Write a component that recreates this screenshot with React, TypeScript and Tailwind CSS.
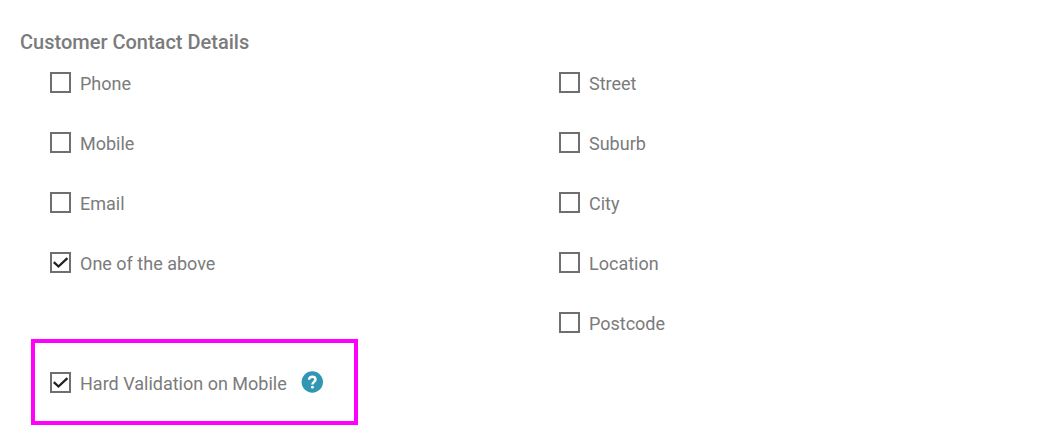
import { useState } from "react";

interface Field {
  id: string;
  label: string;
}

const contactFields: Field[] = [
  { id: "phone", label: "Phone" },
  { id: "mobile", label: "Mobile" },
  { id: "email", label: "Email" },
  { id: "oneOf", label: "One of the above" },
];

const addressFields: Field[] = [
  { id: "street", label: "Street" },
  { id: "suburb", label: "Suburb" },
  { id: "city", label: "City" },
  { id: "location", label: "Location" },
  { id: "postcode", label: "Postcode" },
];

interface CheckFieldProps {
  field: Field;
  checked: boolean;
  onToggle: (id: string) => void;
}

function CheckField({ field, checked, onToggle }: CheckFieldProps) {
  return (
    <div className="flex h-6 items-start gap-2">
      <span className="grid h-6 w-6 shrink-0 place-items-center">
        <input
          id={field.id}
          type="checkbox"
          checked={checked}
          onChange={() => onToggle(field.id)}
          className="col-start-1 row-start-1 h-[21px] w-[21px] appearance-none border-2 border-[#6f6f6f] bg-white"
        />
        {checked && (
          <svg
            viewBox="0 0 21 21"
            className="pointer-events-none col-start-1 row-start-1 h-[21px] w-[21px]"
            fill="none"
            stroke="#212121"
            strokeWidth="2.3"
          >
            <path d="M3.8 10.2l4.7 4.3 8.9-8.3" />
          </svg>
        )}
      </span>
      <label htmlFor={field.id} className="pt-0.5 text-lg leading-6">
        {field.label}
      </label>
    </div>
  );
}

function HelpIcon() {
  return (
    <svg viewBox="0 0 22 22" className="h-[22px] w-[22px]" fill="none">
      <circle cx="11.3" cy="11" r="10.7" fill="#3096b4" />
      <path
        d="M8.1 8.7c0-1.9 1.4-3 3.2-3s3.2 1.1 3.2 2.8c0 2.3-3.1 2.4-3.1 5.1"
        stroke="#fff"
        strokeWidth="2.4"
      />
      <circle cx="11.4" cy="16.2" r="1.4" fill="#fff" />
    </svg>
  );
}

export default function App() {
  const [selected, setSelected] = useState<string[]>(["oneOf", "hardValidation"]);

  function toggle(id: string) {
    setSelected((prev) =>
      prev.includes(id) ? prev.filter((item) => item !== id) : [...prev, id]
    );
  }

  return (
    <main className="bg-white px-5 pt-7 pb-4 font-[Roboto,sans-serif] text-[#7b7b7b]">
      <h2 className="text-xl leading-7 font-medium">Customer Contact Details</h2>

      <div className="mt-[14px] grid grid-cols-2 pl-7">
        <div className="flex flex-col gap-9">
          {contactFields.map((field) => (
            <CheckField
              key={field.id}
              field={field}
              checked={selected.includes(field.id)}
              onToggle={toggle}
            />
          ))}
        </div>
        <div className="flex flex-col gap-9 pl-[22px]">
          {addressFields.map((field) => (
            <CheckField
              key={field.id}
              field={field}
              checked={selected.includes(field.id)}
              onToggle={toggle}
            />
          ))}
        </div>
      </div>

      <div className="mt-[5px] ml-[11px] flex h-[86px] w-fit items-center gap-[14px] border-4 border-[#ff00ff] pr-[31px] pl-[13px]">
        <CheckField
          field={{ id: "hardValidation", label: "Hard Validation on Mobile" }}
          checked={selected.includes("hardValidation")}
          onToggle={toggle}
        />
        <button type="button" aria-label="Help">
          <HelpIcon />
        </button>
      </div>
    </main>
  );
}
